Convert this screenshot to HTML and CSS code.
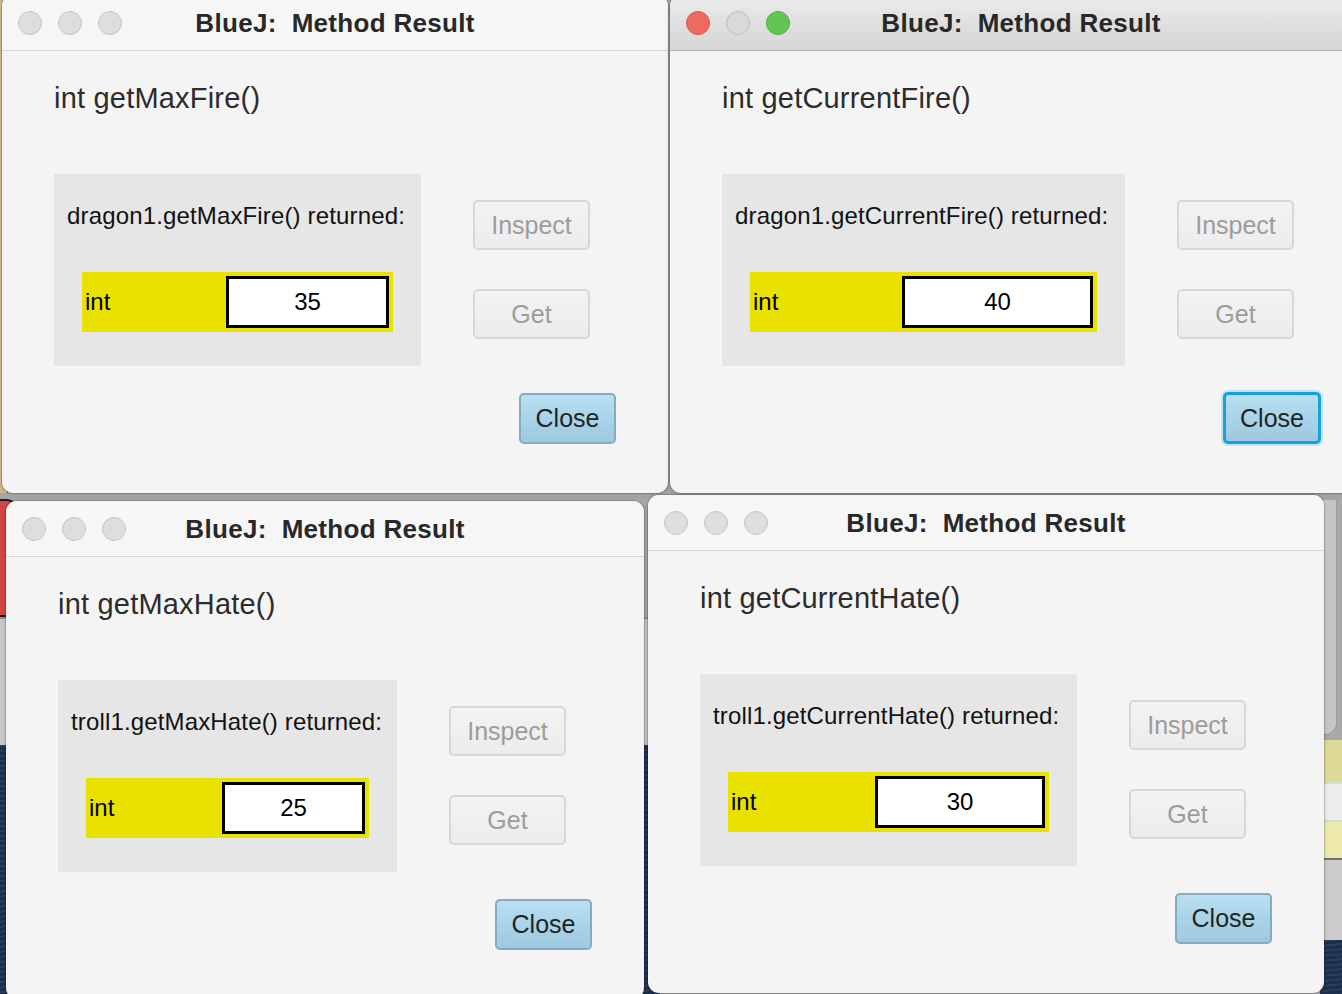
FILE: index.html
```html
<!DOCTYPE html>
<html lang="en">
<head>
<meta charset="utf-8">
<title>BlueJ: Method Result</title>
<link rel="stylesheet" href="styles.css">
</head>
<body>
<div class="desktop">
  <div class="bg bg-tan"></div>
  <div class="bg bg-red"></div>
  <div class="bg bg-leftband"></div>
  <div class="bg bg-sea"></div>
  <div class="bg bg-sea-right"></div>
  <div class="bg bg-rightwin"></div>
  <div class="bg bg-rightstripes"></div>

  <section class="win w1">
    <header class="titlebar">
      <div class="lights"><span class="light"></span><span class="light"></span><span class="light"></span></div>
      <h1 class="title">BlueJ:  Method Result</h1>
    </header>
    <div class="content">
      <h2 class="sig">int getMaxFire()</h2>
      <div class="main">
        <div class="panel">
          <p class="returned">dragon1.getMaxFire() returned:</p>
          <div class="result"><span class="type">int</span><span class="field">35</span></div>
        </div>
        <div class="side">
          <button class="btn" disabled>Inspect</button>
          <button class="btn" disabled>Get</button>
        </div>
      </div>
      <div class="footer"><button class="btn close">Close</button></div>
    </div>
  </section>

  <section class="win w2 active">
    <header class="titlebar">
      <div class="lights"><span class="light red"></span><span class="light"></span><span class="light green"></span></div>
      <h1 class="title">BlueJ:  Method Result</h1>
    </header>
    <div class="content">
      <h2 class="sig">int getCurrentFire()</h2>
      <div class="main">
        <div class="panel">
          <p class="returned">dragon1.getCurrentFire() returned:</p>
          <div class="result"><span class="type">int</span><span class="field">40</span></div>
        </div>
        <div class="side">
          <button class="btn" disabled>Inspect</button>
          <button class="btn" disabled>Get</button>
        </div>
      </div>
      <div class="footer"><button class="btn close focused">Close</button></div>
    </div>
  </section>

  <section class="win w3">
    <header class="titlebar">
      <div class="lights"><span class="light"></span><span class="light"></span><span class="light"></span></div>
      <h1 class="title">BlueJ:  Method Result</h1>
    </header>
    <div class="content">
      <h2 class="sig">int getMaxHate()</h2>
      <div class="main">
        <div class="panel">
          <p class="returned">troll1.getMaxHate() returned:</p>
          <div class="result"><span class="type">int</span><span class="field">25</span></div>
        </div>
        <div class="side">
          <button class="btn" disabled>Inspect</button>
          <button class="btn" disabled>Get</button>
        </div>
      </div>
      <div class="footer"><button class="btn close">Close</button></div>
    </div>
  </section>

  <section class="win w4">
    <header class="titlebar">
      <div class="lights"><span class="light"></span><span class="light"></span><span class="light"></span></div>
      <h1 class="title">BlueJ:  Method Result</h1>
    </header>
    <div class="content">
      <h2 class="sig">int getCurrentHate()</h2>
      <div class="main">
        <div class="panel">
          <p class="returned">troll1.getCurrentHate() returned:</p>
          <div class="result"><span class="type">int</span><span class="field">30</span></div>
        </div>
        <div class="side">
          <button class="btn" disabled>Inspect</button>
          <button class="btn" disabled>Get</button>
        </div>
      </div>
      <div class="footer"><button class="btn close">Close</button></div>
    </div>
  </section>
</div>
</body>
</html>
```

FILE: styles.css
```css
* { box-sizing: border-box; }

html, body {
  margin: 0;
  padding: 0;
  width: 1342px;
  height: 994px;
  overflow: hidden;
}

body {
  font-family: "Liberation Sans", Arial, sans-serif;
  background: #a9a9a9;
}

.desktop {
  position: relative;
  width: 1342px;
  height: 994px;
  overflow: hidden;
  background: #a8a8a8;
}

/* ---- desktop background bits peeking between windows ---- */
.bg { position: absolute; }
.bg-tan {
  left: 0; top: 0; width: 8px; height: 493px;
  background: #d8b98c;
  border-right: 1px solid #333;
}
.bg-red {
  left: -30px; top: 499px; width: 50px; height: 118px;
  background: #d54545;
  border: 2px solid #1c1c1c;
  border-radius: 14px;
}
.bg-leftband {
  left: 0; top: 617px; width: 660px; height: 128px;
  background: #c9c9c9;
  border-top: 1px solid #9a9a9a;
  box-shadow: inset 0 72px 0 -71px #8a8a8a;
}
.bg-sea {
  left: 0; top: 745px; width: 660px; height: 260px;
  background:
    repeating-linear-gradient(175deg, rgba(255,255,255,0.05) 0 2px, rgba(0,0,0,0.08) 2px 5px),
    #1e3454;
}
.bg-sea-right {
  left: 1320px; top: 940px; width: 30px; height: 60px;
  background:
    repeating-linear-gradient(175deg, rgba(255,255,255,0.05) 0 2px, rgba(0,0,0,0.08) 2px 5px),
    #1e3454;
}
.bg-rightwin {
  left: 1290px; top: 500px; width: 47px; height: 235px;
  background: linear-gradient(90deg, #d9d9d9, #c4c4c4);
  border-radius: 0 0 12px 0;
  border-right: 1px solid #9c9c9c;
  border-bottom: 1px solid #9c9c9c;
  z-index: 0;
}
.bg-rightstripes {
  left: 1320px; top: 740px; width: 30px; height: 200px;
  background: linear-gradient(180deg,
    #dedb98 0 42px,
    #cfe0d0 42px 44px,
    #ededed 44px 80px,
    #cfe0d0 80px 82px,
    #ece9aa 82px 118px,
    #6f6f6f 118px 120px,
    #cdcdcd 120px 200px);
}

/* ---- windows ---- */
.win {
  position: absolute;
  height: 498px;
  display: flex;
  flex-direction: column;
  background: #f4f4f4;
  border-radius: 11px;
  overflow: hidden;
  box-shadow: 0 0 0 1px rgba(0,0,0,0.18), 0 2px 6px rgba(0,0,0,0.12);
  z-index: 1;
}
.w1 { left: 2px;   top: -5px;  width: 666px; --panel: 367px; --field: 163px; }
.w2 { left: 670px; top: -5px;  width: 702px; --panel: 403px; --field: 191px; }
.w3 { left: 6px;   top: 501px; width: 638px; --panel: 339px; --field: 143px; }
.w4 { left: 648px; top: 495px; width: 676px; --panel: 377px; --field: 170px; }

.titlebar {
  flex: 0 0 56px;
  display: grid;
  grid-template-columns: 1fr auto 1fr;
  align-items: center;
  background: #f6f6f6;
  border-bottom: 1px solid #d6d6d6;
}
.active .titlebar {
  background: linear-gradient(180deg, #ececec 0%, #dedede 60%, #d6d6d6 100%);
  border-bottom: 1px solid #b4b4b4;
}

.lights {
  display: flex;
  gap: 16px;
  padding-left: 16px;
}
.light {
  width: 24px;
  height: 24px;
  border-radius: 50%;
  background: #dedede;
  border: 1px solid #c6c6c6;
}
.light.red { background: #ec6a5f; border-color: #d4584e; }
.light.green { background: #62c655; border-color: #52ad45; }
.active .light:not(.red):not(.green) { background: #d9d9d9; border-color: #bdbdbd; }

.title {
  margin: 0;
  white-space: pre;
  font-size: 26px;
  font-weight: bold;
  letter-spacing: 0.3px;
  color: #282828;
  line-height: 30px;
}

.content {
  padding: 30px 52px 0 52px;
  display: flex;
  flex-direction: column;
}

.sig {
  margin: 0;
  font-size: 29px;
  font-weight: normal;
  line-height: 34px;
  color: #2c2c2c;
  letter-spacing: 0.2px;
}

.main {
  display: flex;
  gap: 52px;
  margin-top: 59px;
}

.panel {
  width: var(--panel);
  flex: 0 0 auto;
  height: 192px;
  background: #e6e6e6;
  padding: 28px 16px 0 13px;
}

.returned {
  margin: 0;
  font-size: 24px;
  line-height: 28px;
  color: #111;
  white-space: nowrap;
  letter-spacing: 0.15px;
}

.result {
  margin: 42px 12px 0 15px;
  height: 60px;
  background: #e9e200;
  display: flex;
  align-items: center;
  padding: 4px 4px 4px 3px;
}
.type {
  flex: 1;
  font-size: 24px;
  color: #000;
}
.field {
  width: var(--field);
  height: 52px;
  background: #fff;
  border: 3px solid #000;
  display: flex;
  align-items: center;
  justify-content: center;
  font-size: 24px;
  color: #000;
}

.side {
  display: flex;
  flex-direction: column;
  gap: 39px;
  padding-top: 26px;
}

.btn {
  font-family: "Liberation Sans", Arial, sans-serif;
  width: 117px;
  height: 50px;
  font-size: 25px;
  border-radius: 5px;
  border: 2px solid #d7d7d7;
  background: linear-gradient(180deg, #f3f3f3 0%, #ececec 100%);
  color: #9c9c9c;
  padding: 0;
  cursor: default;
}

.footer {
  display: flex;
  justify-content: flex-end;
  margin-top: 27px;
}

.btn.close {
  width: 97px;
  height: 51px;
  color: #232323;
  border: 2px solid #83abc1;
  background: linear-gradient(180deg, #b9e0f2 0%, #a7d2e7 55%, #9ec9de 100%);
}
.btn.close.focused {
  width: 98px;
  height: 52px;
  margin-top: -1px;
  margin-right: -1px;
  border: 3px solid #17a0d9;
  box-shadow: 0 0 0 2px #bfe4f4;
}
```
